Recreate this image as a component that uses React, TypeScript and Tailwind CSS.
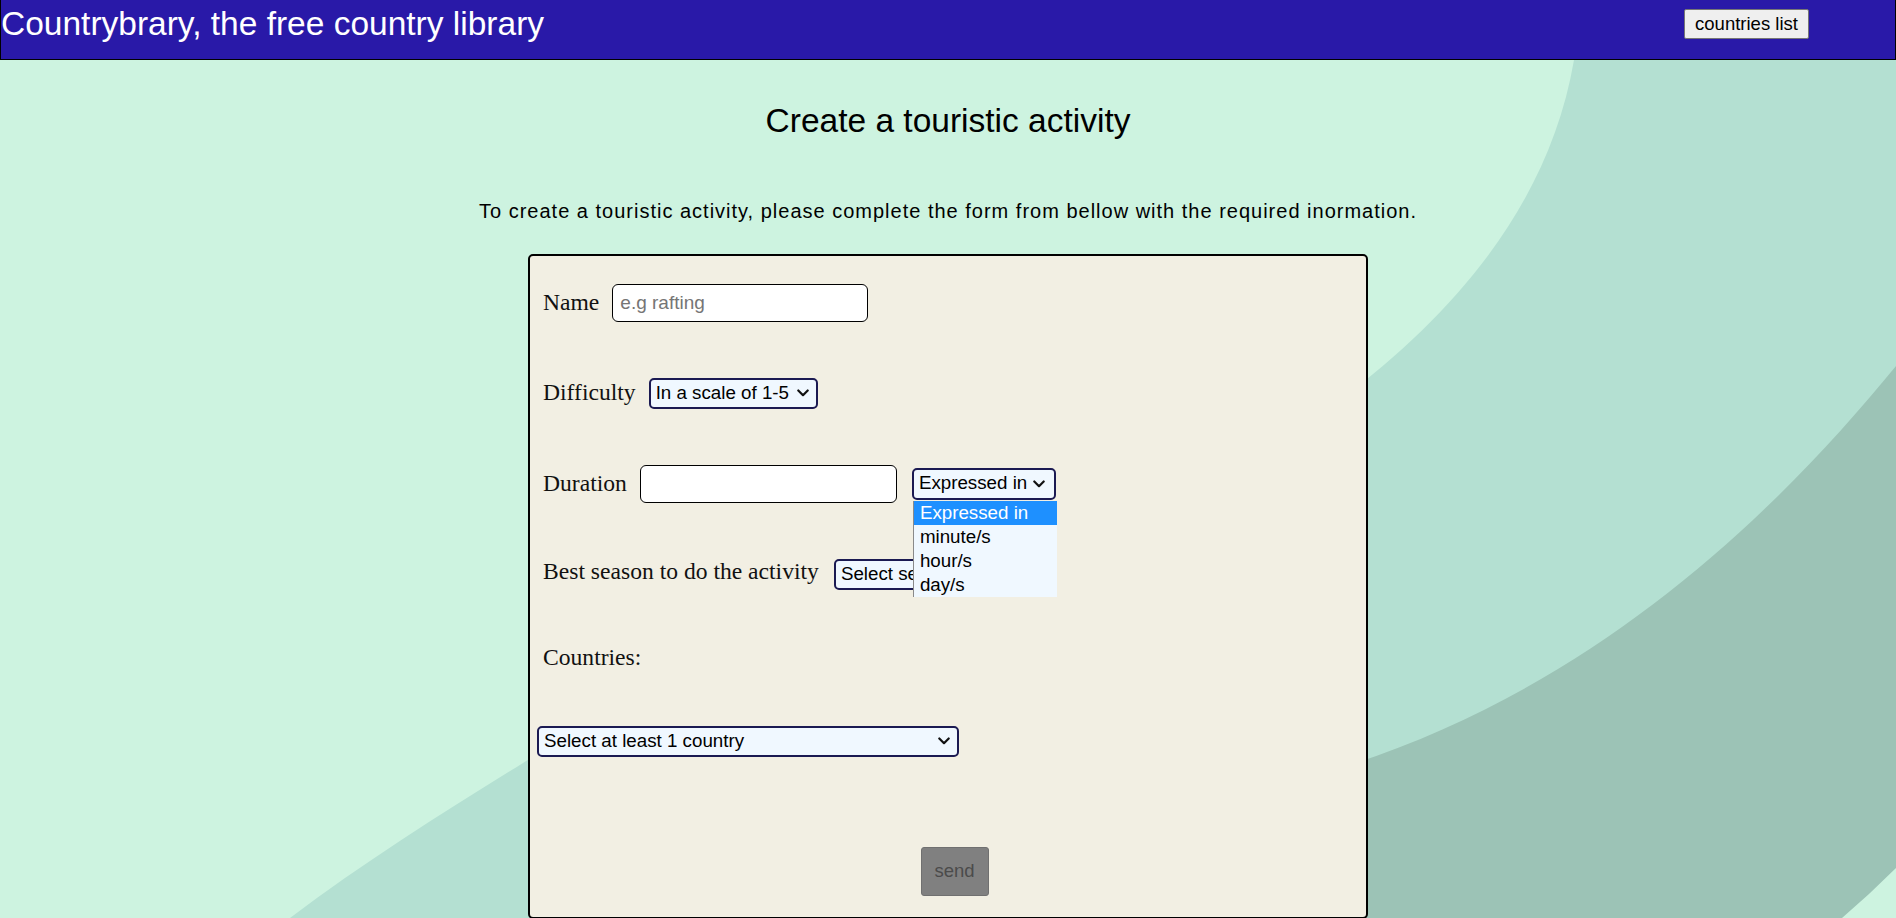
import { ReactNode } from 'react';

const sans = "font-['Liberation_Sans',Arial,sans-serif]";
const serif = "font-['Liberation_Serif','Times_New_Roman',serif]";

function Chevron() {
  return (
    <svg width="12" height="8" viewBox="0 0 12 8" fill="none" className="shrink-0">
      <path d="M1.3 1.5 L6 6.2 L10.7 1.5" stroke="#111" strokeWidth="2.2" strokeLinecap="round" strokeLinejoin="round" />
    </svg>
  );
}

function FakeSelect({ label, className = '', children }: { label: string; className?: string; children?: ReactNode }) {
  return (
    <div
      className={`relative flex h-[31px] items-center justify-between rounded-[5px] border-2 border-[#1b1a52] bg-[#f0f8ff] pl-[5px] pr-[7px] text-[18.75px] leading-none text-black ${sans} ${className}`}
    >
      <span className="whitespace-nowrap">{label}</span>
      <Chevron />
      {children}
    </div>
  );
}

function Label({ children, className = '' }: { children: ReactNode; className?: string }) {
  return <span className={`text-[23.6px] leading-[26px] text-[#111] ${serif} ${className}`}>{children}</span>;
}

function Background() {
  return (
    <svg className="absolute left-0 top-0 h-[918px] w-[1896px]" viewBox="0 0 1896 918" preserveAspectRatio="none">
      <rect width="1896" height="918" fill="#cdf3e0" />
      <path d="M1574,60 C1550,200 1460,310 1340,400 L560,740 C480,790 380,850 290,918 L1896,918 L1896,60 Z" fill="#b4e0d2" />
      <path d="M1896,366 C1770,520 1590,690 1340,768 L700,918 L1896,918 Z" fill="#9cc3b6" />
      <path d="M1842,918 Q1870,894 1896,868 L1896,918 Z" fill="#cdf3e0" />
    </svg>
  );
}

const durationUnits = ['Expressed in', 'minute/s', 'hour/s', 'day/s'];

export default function App() {
  return (
    <div className={`relative h-[918px] w-full overflow-hidden ${sans}`}>
      <Background />

      <header className="relative z-10 flex h-[60px] items-start justify-between border-x border-b border-black bg-[#2919a8]">
        <h1 className="pt-[7px] text-[33.5px] leading-none text-white">Countrybrary, the free country library</h1>
        <button
          type="button"
          className="mr-[86px] mt-[9px] h-[30px] w-[125px] rounded-[2px] border border-[#767676] bg-[#efefef] text-[18.5px] leading-none text-black"
        >
          countries list
        </button>
      </header>

      <main className="relative z-10 flex flex-col items-center">
        <h2 className="mt-[44px] text-[33.5px] leading-none text-black">Create a touristic activity</h2>
        <p className="mt-[63px] text-[20px] leading-none tracking-[1px] text-black">
          To create a touristic activity, please complete the form from bellow with the required inormation.
        </p>

        <form className="mt-[33px] flex h-[665px] w-[840px] flex-col rounded-[5px] border-2 border-black bg-[#f2efe3] pl-[13px] pt-[28px]">
          <div className="flex h-[38px] items-center">
            <Label className="pb-[1px]">Name</Label>
            <input
              placeholder="e.g rafting"
              className="ml-[13px] h-[38px] w-[256px] rounded-[6px] border border-black bg-white pl-[7px] text-[19px] text-black outline-none placeholder:text-[#757575]"
            />
          </div>

          <div className="mt-[56px] flex h-[31px] items-center">
            <Label className="pb-[3px]">Difficulty</Label>
            <FakeSelect label="In a scale of 1-5" className="ml-[13px] w-[169px]" />
          </div>

          <div className="mt-[56px] flex h-[38px] items-center">
            <Label className="pb-[2px]">Duration</Label>
            <input className="ml-[13px] h-[38px] w-[257px] rounded-[6px] border border-black bg-white outline-none" />
            <FakeSelect label="Expressed in" className="ml-[15px] h-[32px] w-[144px] pr-[9px]">
              <div className="absolute left-[-1px] top-[31px] z-20 flex w-[144px] flex-col border-l border-[#8a8a8a] bg-[#f0f8ff]">
                {durationUnits.map((unit, i) => (
                  <div
                    key={unit}
                    className={`h-[24px] pl-[6px] text-[18.75px] leading-[24px] ${i === 0 ? 'bg-[#1e90ff] text-white' : 'text-black'}`}
                  >
                    {unit}
                  </div>
                ))}
              </div>
            </FakeSelect>
          </div>

          <div className="mt-[56px] flex h-[31px] items-center">
            <Label className="pb-[6px]">Best season to do the activity</Label>
            <FakeSelect label="Select season" className="ml-[15px] w-[170px]" />
          </div>

          <div className="mt-[54px] flex h-[26px] items-center">
            <Label>Countries:</Label>
          </div>

          <div className="mt-[56px] flex">
            <FakeSelect label="Select at least 1 country" className="-ml-[6px] w-[422px]" />
          </div>

          <div className="mt-[90px] flex justify-center">
            <button
              type="button"
              disabled
              className="h-[49px] w-[68px] rounded-[3px] border border-[#707070] bg-[#808080] text-[18.5px] text-[#4b4b4b]"
            >
              send
            </button>
          </div>
        </form>
      </main>
    </div>
  );
}
